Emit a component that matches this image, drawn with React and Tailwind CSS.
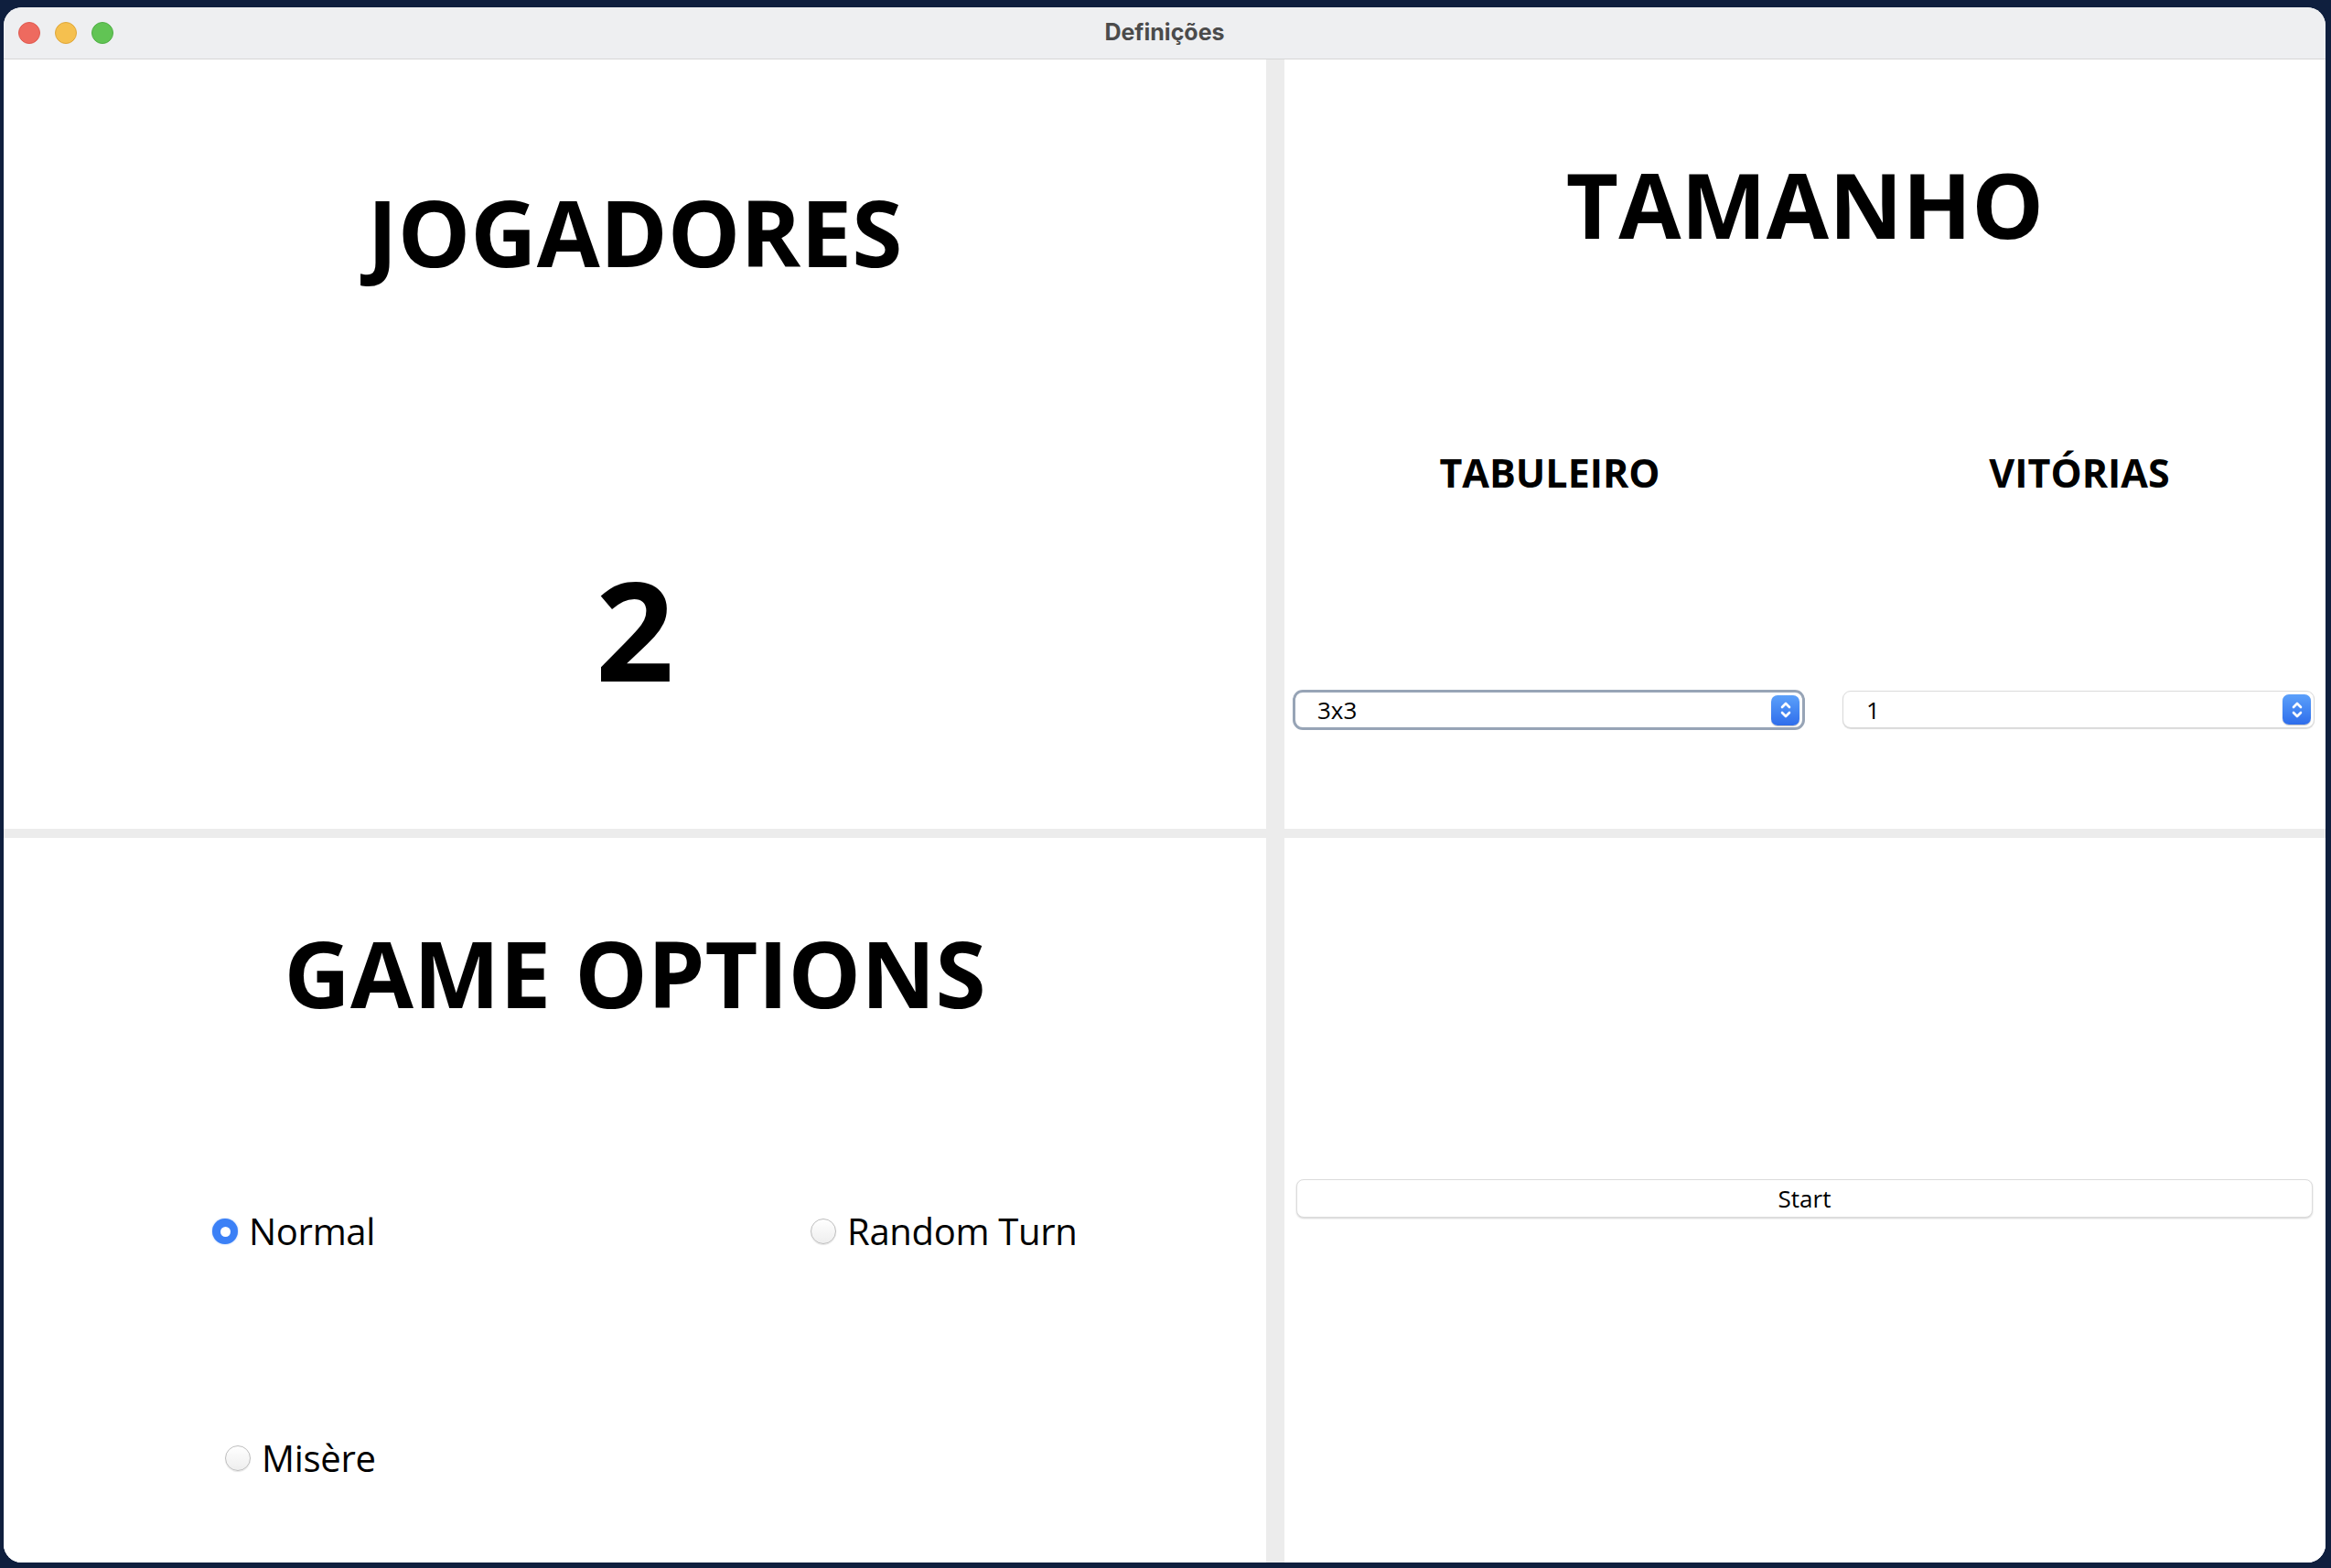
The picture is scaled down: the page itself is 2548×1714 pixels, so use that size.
import { useState } from 'react'

const font = "font-['Open_Sans','Noto_Sans',sans-serif]"

function Stepper() {
  return (
    <div className="flex h-[33px] w-[31px] items-center justify-center rounded-[7px] bg-linear-to-b from-[#5ca0fa] to-[#2f6deb] shadow-[0_1px_1px_rgba(0,0,0,0.25)]">
      <svg width="14" height="24" viewBox="0 0 14 24" fill="none" stroke="white" strokeWidth="2.6" strokeLinecap="round" strokeLinejoin="round">
        <path d="M3 9 L7 5 L11 9" />
        <path d="M3 15 L7 19 L11 15" />
      </svg>
    </div>
  )
}

function Radio({ label, checked, onClick }) {
  return (
    <button onClick={onClick} className="flex h-[40px] items-center gap-[12px]">
      {checked ? (
        <span className="flex h-[28px] w-[28px] items-center justify-center rounded-full bg-[#3b80f6] shadow-[0_0_2px_rgba(59,128,246,0.5)]">
          <span className="h-[11px] w-[11px] rounded-full bg-white" />
        </span>
      ) : (
        <span className="h-[28px] w-[28px] rounded-full border-[1.5px] border-[#bdbdbd] bg-linear-to-b from-white to-[#eeeeee] shadow-[0_1px_1px_rgba(0,0,0,0.1)]" />
      )}
      <span className="text-[40px] leading-none tracking-[-0.3px] text-black">{label}</span>
    </button>
  )
}

export default function App() {
  const [mode, setMode] = useState('normal')

  return (
    <div className={`h-[1714px] w-[2548px] bg-[#0f1f3e] pl-[4px] pt-[8px] ${font}`}>
      <div className="h-[1700px] w-[2538px] overflow-hidden rounded-[20px] bg-white">

        {/* TITLE BAR */}
        <div className="relative flex h-[57px] items-center justify-center border-b border-[#d6d6d6] bg-[#eeeff1]">
          <div className="absolute left-[16px] top-[16px] flex gap-[16px]">
            <span className="h-[24px] w-[24px] rounded-full border border-[#de5a50] bg-[#ee6a5f]" />
            <span className="h-[24px] w-[24px] rounded-full border border-[#dea63a] bg-[#f5c04f]" />
            <span className="h-[24px] w-[24px] rounded-full border border-[#4fae45] bg-[#61c454]" />
          </div>
          <span className="font-['Inter','Open_Sans',sans-serif] text-[25px] font-bold text-[#4b4b4b]">Definições</span>
        </div>

        {/* PANELS */}
        <div className="grid h-[1643px] grid-cols-[1380px_1138px] grid-rows-[841px_792px] gap-x-[20px] gap-y-[10px] bg-[#ececec]">

          {/* JOGADORES */}
          <div className="flex flex-col items-center bg-white">
            <h1 className="mt-[138px] text-[100px] font-bold leading-none">JOGADORES</h1>
            <div className="mt-[309px] text-[150px] font-bold leading-none">2</div>
          </div>

          {/* TAMANHO */}
          <div className="flex flex-col bg-white">
            <h1 className="mt-[108px] text-center text-[99px] font-bold leading-none">TAMANHO</h1>
            <div className="mt-[223px] grid grid-cols-[580px_538px] gap-x-[20px]">
              <h2 className="text-center text-[43px] font-bold leading-none">TABULEIRO</h2>
              <h2 className="text-center text-[43px] font-bold leading-none">VITÓRIAS</h2>
            </div>
            <div className="mt-[216px] grid grid-cols-[580px_538px] items-start gap-x-[20px]">
              <div className="ml-[9px] flex h-[44px] w-[560px] items-center justify-between rounded-[11px] border-[3px] border-[#97a4b6] bg-white pl-[24px] pr-[3px]">
                <span className="text-[26px] leading-none">3x3</span>
                <Stepper />
              </div>
              <div className="ml-[10px] mt-[1px] flex h-[41px] w-[516px] items-center justify-between rounded-[9px] border border-[#dadada] bg-white pl-[25px] pr-[3px] shadow-[0_1px_1px_rgba(0,0,0,0.15)]">
                <span className="text-[26px] leading-none">1</span>
                <Stepper />
              </div>
            </div>
          </div>

          {/* GAME OPTIONS */}
          <div className="flex flex-col bg-white">
            <h1 className="mt-[97px] text-center text-[100px] font-bold leading-none">GAME OPTIONS</h1>
            <div className="mt-[213px] flex">
              <div className="w-[882px] pl-[228px]">
                <Radio label="Normal" checked={mode === 'normal'} onClick={() => setMode('normal')} />
              </div>
              <Radio label="Random Turn" checked={mode === 'random'} onClick={() => setMode('random')} />
            </div>
            <div className="mt-[208px] pl-[242px]">
              <Radio label="Misère" checked={mode === 'misere'} onClick={() => setMode('misere')} />
            </div>
          </div>

          {/* START */}
          <div className="flex flex-col bg-white">
            <button className="ml-[13px] mr-[14px] mt-[373px] h-[42px] rounded-[8px] border border-[#dcdcdc] bg-white text-[26px] leading-none text-black shadow-[0_1px_2px_rgba(0,0,0,0.18)]">
              Start
            </button>
          </div>

        </div>
      </div>
    </div>
  )
}
